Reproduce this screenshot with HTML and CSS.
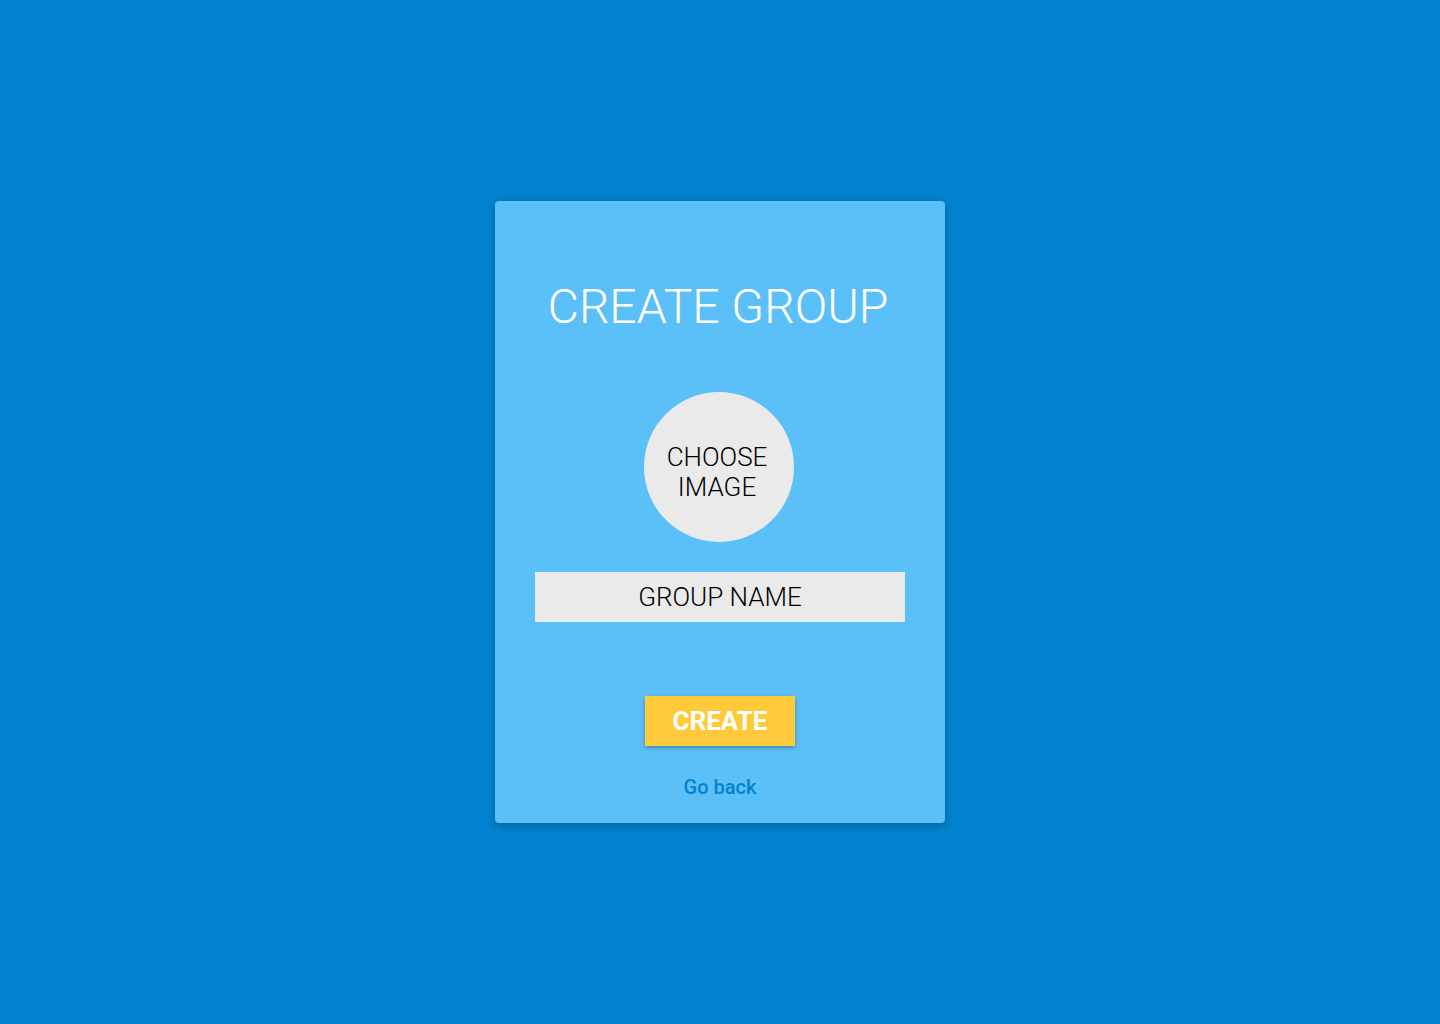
FILE: index.html
```html
<!DOCTYPE html>
<html>
<head>
<meta charset="utf-8">
<link rel="stylesheet" href="styles.css">
</head>
<body>
<main class="page">
  <section class="card">
    <h1 class="title">CREATE GROUP</h1>
    <div class="avatar">CHOOSE<br>IMAGE</div>
    <div class="name-field">GROUP NAME</div>
    <button class="create-btn">CREATE</button>
    <a class="back-link" href="#">Go back</a>
  </section>
</main>
</body>
</html>
```
FILE: styles.css
```css
html, body {
  margin: 0;
  padding: 0;
  height: 100%;
}
body {
  background: #0282CE;
  font-family: Roboto, "Noto Sans", sans-serif;
}
.page {
  height: 1024px;
  display: flex;
  justify-content: center;
  align-items: flex-start;
}
.card {
  margin-top: 201px;
  width: 450px;
  height: 622px;
  box-sizing: border-box;
  background: #5CC0F8;
  border-radius: 4px;
  box-shadow: 0 2px 8px rgba(0, 0, 0, 0.25);
  display: flex;
  flex-direction: column;
  align-items: center;
  padding-top: 78px;
}
.title {
  margin: 0 4px 0 0;
  font-weight: 300;
  font-size: 48px;
  line-height: 56px;
  color: #ffffff;
}
.avatar {
  margin: 57px 2px 0 0;
  width: 150px;
  height: 150px;
  box-sizing: border-box;
  padding: 10px 4px 0 0;
  border-radius: 50%;
  background: #EAEAEA;
  display: flex;
  align-items: center;
  justify-content: center;
  text-align: center;
  font-weight: 300;
  font-size: 26px;
  line-height: 30px;
  color: #000;
}
.name-field {
  margin-top: 30px;
  width: 370px;
  height: 50px;
  background: #EAEAEA;
  display: flex;
  align-items: center;
  justify-content: center;
  font-weight: 300;
  font-size: 26px;
  color: #000;
}
.create-btn {
  margin-top: 74px;
  width: 150px;
  height: 50px;
  border: none;
  background: #FFCA3A;
  color: #ffffff;
  font-family: Roboto, "Noto Sans", sans-serif;
  font-weight: 700;
  font-size: 26px;
  box-shadow: 0 2px 4px rgba(0, 0, 0, 0.3);
  padding: 0;
}
.back-link {
  margin-top: 29px;
  font-weight: 500;
  font-size: 20px;
  line-height: 24px;
  color: #0282CE;
  text-decoration: none;
}
```
